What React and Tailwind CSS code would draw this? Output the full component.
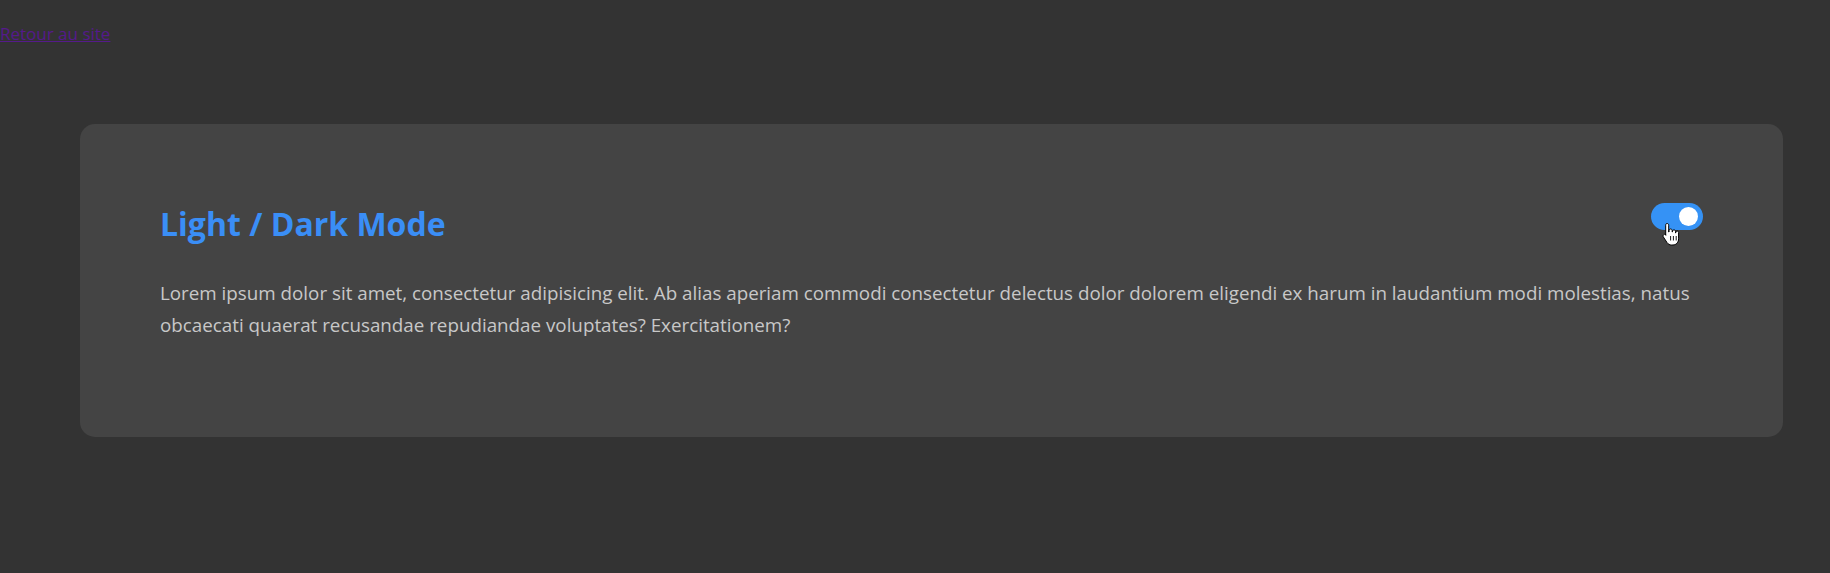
const HandCursor = () => (
  <svg width="18" height="25" viewBox="0 0 18 25" className="absolute left-[11px] top-[19px] pointer-events-none">
    <path
      d="M5 1.5c1 0 1.7.7 1.7 1.7V10h.3V8.6c0-1 .7-1.6 1.6-1.6s1.6.6 1.6 1.6V10h.3V9.4c0-.9.7-1.5 1.5-1.5s1.5.6 1.5 1.5V11h.3v-.6c0-.8.6-1.4 1.4-1.4s1.4.6 1.4 1.4v6.4c0 3.300-2.3 6.2-5.6 6.2H9.4c-1.8 0-3.200-.8-4.300-2.3L1.4 15c-.6-.8-.4-1.9.4-2.4.8-.5 1.8-.3 2.3.4l-.5.1.1.1V3.2c0-1 .4-1.7 1.3-1.7z"
      fill="#fff"
      stroke="#000"
      strokeWidth="1"
      strokeLinejoin="round"
    />
    <path d="M8.6 14v4.5M11.4 14v4.5M14.2 14v4.5" stroke="#000" strokeWidth="0.9" />
  </svg>
);

const App = () => {
  return (
    <div className="min-h-screen bg-[#333333] font-['Open_Sans',sans-serif]">
      <div className="pt-[22px]">
        <a href="#" className="text-[17px] leading-[22px] text-[#551a8b] underline">
          Retour au site
        </a>
      </div>

      <div className="pl-[80px] pr-[47px] pt-[78px]">
        <div className="bg-[#444444] rounded-[15px] px-[80px] pt-[81px] pb-[96px]">
          <div className="flex items-center justify-between">
            <h1 className="text-[32px] leading-[38px] font-bold text-[#3a8ef6]">
              Light / Dark Mode
            </h1>
            <button className="relative w-[52px] h-[27px] rounded-full bg-[#3592f5] flex items-center justify-end px-[5px] -mt-[15px]">
              <span className="w-[19px] h-[19px] rounded-full bg-white" />
              <HandCursor />
            </button>
          </div>
          <p className="mt-[34px] text-[18.8px] leading-[32px] text-[#c8c8c8]">
            Lorem ipsum dolor sit amet, consectetur adipisicing elit. Ab alias aperiam commodi consectetur delectus dolor dolorem eligendi ex harum in laudantium modi molestias, natus obcaecati quaerat recusandae repudiandae voluptates? Exercitationem?
          </p>
        </div>
      </div>
    </div>
  );
};

export default App;
